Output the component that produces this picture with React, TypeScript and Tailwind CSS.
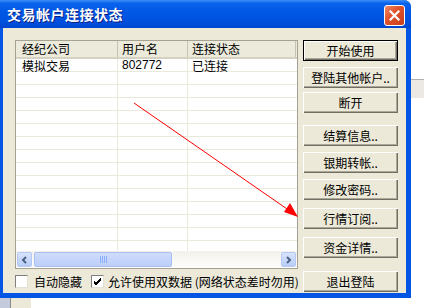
import React from 'react';

const FONT = { fontFamily: '"Noto Sans CJK SC", "Liberation Sans", sans-serif' };

const btnShadow =
  'shadow-[inset_1px_1px_0_#ffffff,inset_-1px_-1px_0_#716f64,inset_-2px_-2px_0_#aca899]';

const Btn = ({ label, primary, className = '' }: { label: string; primary?: boolean; className?: string }) => (
  <div
    className={`h-[21px] w-[95px] flex items-center justify-center text-[12px] text-black bg-[#ece9d8] whitespace-nowrap ${
      primary ? 'border border-black' : ''
    } ${btnShadow} ${className}`}
  >
    {label}
  </div>
);

const Checkbox = ({ checked }: { checked?: boolean }) => (
  <div className="shrink-0 w-[13px] h-[13px] bg-white border border-t-[#808080] border-l-[#808080] border-b-[#e3e1d6] border-r-[#e3e1d6] flex items-center justify-center">
    {checked && (
      <svg width="9" height="9" viewBox="0 0 9 9">
        <path d="M1 4 L3 6 L8 1 M1 5 L3 7 L8 2 M1 6 L3 8 L8 3" stroke="#000" strokeWidth="1" fill="none" />
      </svg>
    )}
  </div>
);

const rows = Array.from({ length: 15 });

export default function App() {
  return (
    <div className="w-[424px] h-[308px] bg-white flex overflow-hidden" style={FONT}>
      <div className="flex flex-col">
        <div className="relative w-[411px] h-[298px] flex flex-col bg-[#0055e5] rounded-tr-[7px] overflow-hidden">
          {/* title bar */}
          <div className="h-[28px] shrink-0 flex items-center justify-between pl-[7px] pr-[6px] bg-[linear-gradient(to_bottom,#3c8ef5_0%,#0a62ec_12%,#0058e6_40%,#0053e0_70%,#004cd8_90%,#0044cc_100%)]">
            <span className="text-white font-bold text-[14px] [text-shadow:1px_1px_0_#0a1f80] tracking-[0.5px]">
              交易帐户连接状态
            </span>
            <div className="w-[21px] h-[21px] mt-[2px] rounded-[3px] border border-white bg-[linear-gradient(135deg,#f08a6a_0%,#e2552e_40%,#c63d18_100%)] flex items-center justify-center">
              <svg width="11" height="11" viewBox="0 0 11 11">
                <path d="M1.5 1.5 L9.5 9.5 M9.5 1.5 L1.5 9.5" stroke="#fff" strokeWidth="2.2" strokeLinecap="square" />
              </svg>
            </div>
          </div>

          {/* client area */}
          <div className="flex-1 ml-[3px] mr-[5px] mb-[5px] bg-[#ece9d8] flex pl-[12px] pt-[12px] pr-[8px]">
            <div className="flex flex-col w-[288px]">
              {/* list view */}
              <div className="w-[283px] h-[229px] shrink-0 border border-[#a5a294] bg-white flex flex-col">
                <div className="h-[18px] shrink-0 flex bg-[#ebeadb] border-b-2 border-[#d6d2c2] text-[12px] leading-[16px] text-black">
                  <div className="w-[102px] pl-[6px] flex items-center border-r border-[#c7c5b2]">经纪公司</div>
                  <div className="w-[70px] pl-[4px] flex items-center border-r border-[#c7c5b2]">用户名</div>
                  <div className="w-[108px] pl-[4px] flex items-center border-r border-[#c7c5b2]">连接状态</div>
                </div>
                <div className="h-[192px] overflow-hidden">
                  {rows.map((_, i) => (
                    <div
                      key={i}
                      className="h-[13px] flex shadow-[inset_0_-1px_0_#ebe9dc] text-[12px] leading-[13px] text-black"
                    >
                      <div className="w-[102px] pl-[6px] border-r border-[#ebe9dc] whitespace-nowrap">{i === 0 ? '模拟交易' : ''}</div>
                      <div className="w-[70px] pl-[4px] border-r border-[#ebe9dc] font-['Liberation_Sans'] text-[12px]">
                        {i === 0 ? '802772' : ''}
                      </div>
                      <div className="w-[108px] pl-[4px] whitespace-nowrap">{i === 0 ? '已连接' : ''}</div>
                    </div>
                  ))}
                </div>
                {/* horizontal scrollbar */}
                <div className="h-[17px] shrink-0 flex items-center bg-[linear-gradient(to_bottom,#f3f1ec,#fefefb)] px-[1px]">
                  <div className="w-[15px] h-[15px] rounded-[2px] bg-[linear-gradient(to_bottom,#d7e3fc,#b9cdf8)] border border-[#b4c8f6] flex items-center justify-center">
                    <svg width="7" height="8" viewBox="0 0 7 8">
                      <path d="M5 1 L2 4 L5 7" stroke="#4d6185" strokeWidth="2" fill="none" />
                    </svg>
                  </div>
                  <div className="ml-[2px] w-[138px] h-[15px] rounded-[2px] bg-[linear-gradient(to_bottom,#cfdcfb,#bccffa)] border border-[#a9bff4] flex items-center justify-center gap-[1px]">
                    {[0, 1, 2, 3].map((k) => (
                      <div key={k} className="w-[1px] h-[7px] bg-[#eef4fe] border-r border-[#8cb0f8]" />
                    ))}
                  </div>
                  <div className="flex-1" />
                  <div className="w-[15px] h-[15px] rounded-[2px] bg-[linear-gradient(to_bottom,#d7e3fc,#b9cdf8)] border border-[#b4c8f6] flex items-center justify-center">
                    <svg width="7" height="8" viewBox="0 0 7 8">
                      <path d="M2 1 L5 4 L2 7" stroke="#4d6185" strokeWidth="2" fill="none" />
                    </svg>
                  </div>
                </div>
              </div>
              {/* checkboxes */}
              <div className="mt-[6px] h-[13px] flex items-center text-[12px] leading-[13px] text-black whitespace-nowrap">
                <Checkbox />
                <span className="ml-[6px]">自动隐藏</span>
                <div className="ml-[9px]">
                  <Checkbox checked />
                </div>
                <span className="ml-[4px]">允许使用双数据 (网络状态差时勿用)</span>
              </div>
            </div>
            <div className="flex flex-col ml-[3px]">
              <Btn label="开始使用" primary />
              <Btn label="登陆其他帐户.." className="mt-[6px]" />
              <Btn label="断开" className="mt-[4px]" />
              <Btn label="结算信息.." className="mt-[12px]" />
              <Btn label="银期转帐.." className="mt-[6px]" />
              <Btn label="修改密码.." className="mt-[6px]" />
              <Btn label="行情订阅.." className="mt-[8px]" />
              <Btn label="资金详情.." className="mt-[8px]" />
              <Btn label="退出登陆" className="mt-[13px]" />
            </div>
          </div>

          {/* red annotation arrow */}
          <svg className="absolute left-0 top-0 pointer-events-none" width="411" height="298">
            <line x1="134" y1="103" x2="290" y2="211" stroke="#ff0000" strokeWidth="1" />
            <polygon points="298,217 284,212 290,203" fill="#ff0000" />
          </svg>
        </div>
        <div className="flex h-[10px]">
          <div className="w-[10px] bg-[#c3cbdc]" />
          <div className="w-[1px] bg-[#8a8a8a]" />
          <div className="w-[20px] bg-[#ece9d8]" />
        </div>
      </div>
      <div className="flex-1 flex flex-col">
        <div className="mt-[79px] h-[1px] bg-[#b0b0b0]" />
        <div className="h-[18px] bg-[#ece9e4]" />
      </div>
    </div>
  );
}
